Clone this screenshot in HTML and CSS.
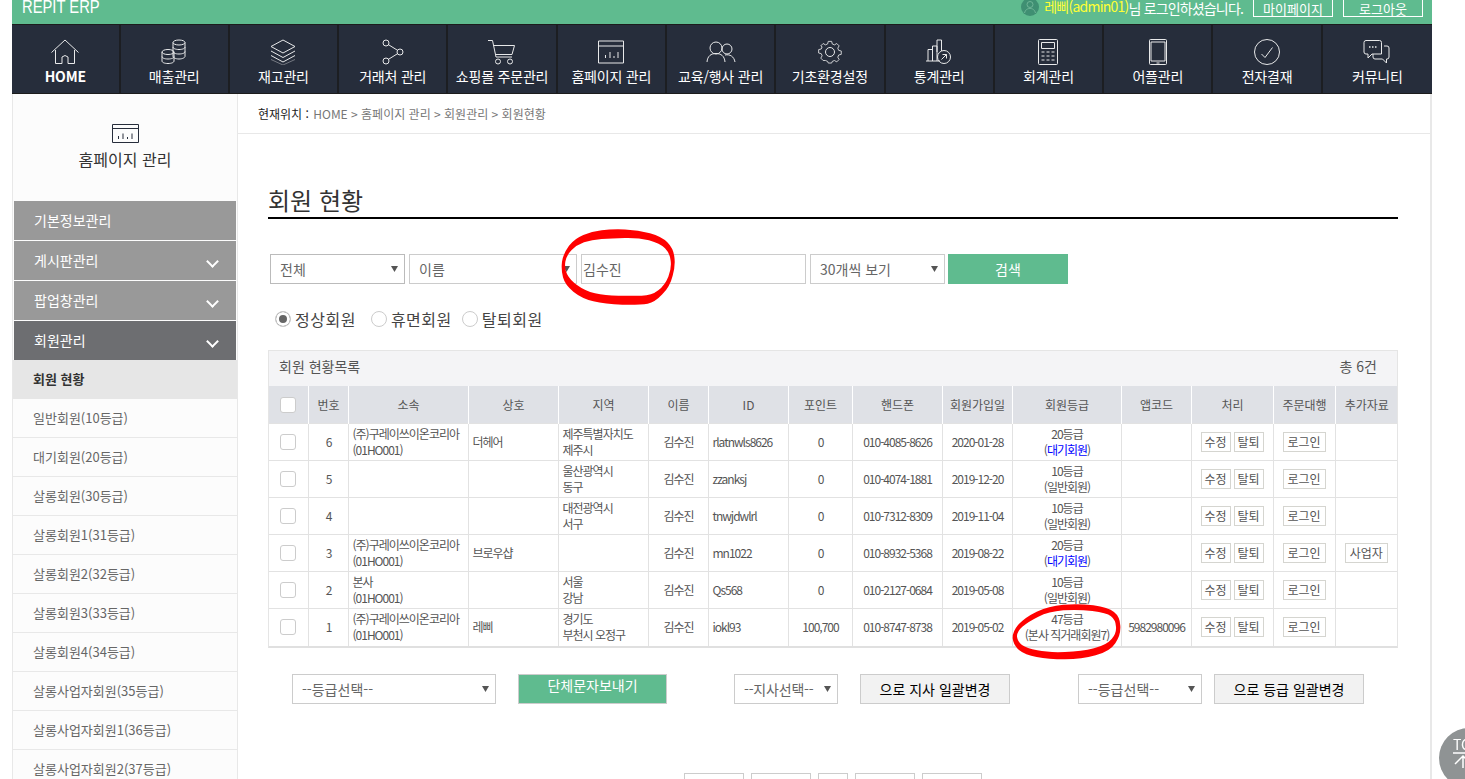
FILE: index.html
```html
<!DOCTYPE html>
<html lang="ko">
<head>
    <meta charset="UTF-8">
    <title>REPIT ERP</title>
    <link rel="stylesheet" href="styles.css">
</head>
<body>
    <div class="wrap">
        <div class="top-bar">
            <div class="logo">REPIT ERP</div>
            <div class="user-info">
                <svg class="avatar" viewBox="0 0 18 18"><circle cx="9" cy="9" r="9" fill="#3f8f72"/><circle cx="9" cy="6.5" r="3" fill="none" stroke="#6fb597"/><path d="M3.5 15c1-3.5 3-4.5 5.500-4.500s4.500 1 5.500 4.500" fill="none" stroke="#6fb597"/></svg>
                <span class="user-name">레삐(admin01)</span><span class="user-msg">님 로그인하셨습니다.</span>
                <a class="top-btn">마이페이지</a>
                <a class="top-btn">로그아웃</a>
            </div>
        </div>

        <div class="gnb">
            <a class="gnb-item">
                <svg class="gnb-icon" viewBox="0 0 30 26"><path d="M1.500 13.500 15 1l13.500 12.500M5.500 11v13.500h6.500V18q3-3 6 0v6.500h6.500V11"/></svg>
                <span class="gnb-home">HOME</span>
            </a>
            <a class="gnb-item">
                <svg class="gnb-icon" viewBox="0 0 30 26"><ellipse cx="20" cy="3.500" rx="6" ry="2.500"/><path d="M14 3.500v14c0 1 2.500 2.500 6 2.500s6-1.500 6-2.500v-14M14 8c0 1.500 2.500 2.500 6 2.500S26 9.500 26 8M14 12.500c0 1.500 2.500 2.500 6 2.500s6-1 6-2.500"/><ellipse cx="9" cy="13" rx="6" ry="2.500"/><path d="M3 13v9c0 1.500 2.500 2.500 6 2.500s6-1 6-2.500v-9M3 17.500c0 1.500 2.500 2.500 6 2.500s6-1 6-2.500"/></svg>
                <span>매출관리</span>
            </a>
            <a class="gnb-item">
                <svg class="gnb-icon" viewBox="0 0 30 26"><path d="M15 1 27 7.500 15 14 3 7.500zM3 12l12 6.500L27 12M3 16.500 15 23l12-6.500"/><path d="M3 20.500 15 26l12-5.500" opacity=".4"/></svg>
                <span>재고관리</span>
            </a>
            <a class="gnb-item">
                <svg class="gnb-icon" viewBox="0 0 30 26"><circle cx="8" cy="4" r="3"/><circle cx="22" cy="13" r="3"/><circle cx="8" cy="22" r="3"/><path d="M10.500 5.700 19.500 11.300M19.500 14.700 10.500 20.300"/></svg>
                <span>거래처 관리</span>
            </a>
            <a class="gnb-item">
                <svg class="gnb-icon" viewBox="0 0 30 26"><path d="M1 1.500h4.500L9 18h16M6.500 6.500h21L25 15.500H8.500"/><circle cx="11" cy="22.500" r="2.500"/><circle cx="23" cy="22.500" r="2.500"/></svg>
                <span>쇼핑몰 주문관리</span>
            </a>
            <a class="gnb-item">
                <svg class="gnb-icon" viewBox="0 0 30 26"><path d="M2.500 2h25v22h-25zM2.500 7h25M9.500 19v-3M14 19v-6M18 19v-2M22 19v-6"/></svg>
                <span>홈페이지 관리</span>
            </a>
            <a class="gnb-item">
                <svg class="gnb-icon" viewBox="0 0 30 26"><circle cx="10" cy="9" r="6"/><path d="M1 23c.5-6 4-8.500 9-8.500s8.500 2.500 9 8.500"/><circle cx="21" cy="10" r="5"/><path d="M19 16c5-1 9 1.500 10 7"/></svg>
                <span>교육/행사 관리</span>
            </a>
            <a class="gnb-item">
                <svg class="gnb-icon" viewBox="0 0 30 26"><path d="M13 1.500h4l.7 3 2.600 1.100 2.700-1.600 2.800 2.800-1.600 2.700 1.100 2.600 3 .7v4l-3 .7-1.100 2.600 1.600 2.700-2.800 2.800-2.700-1.600-2.600 1.100-.7 1.900h-4l-.7-1.900-2.600-1.100L7 24l-2.800-2.800 1.600-2.700-1.100-2.600-3-.7v-4l3-.7 1.100-2.600L4.200 6.800 7 4l2.700 1.600 2.600-1.100z" transform="translate(2.200 1.100) scale(.85)"/><circle cx="15" cy="13" r="4.500"/></svg>
                <span>기초환경설정</span>
            </a>
            <a class="gnb-item">
                <svg class="gnb-icon" viewBox="0 0 30 26"><path d="M4 22V10.500h4.500V22M8.500 22V7H13v15M2 22h14M13 13V1h4.500v11"/><circle cx="20" cy="18" r="6.500"/><path d="M17.500 20.500l5-5M18.500 15.500h4v4"/></svg>
                <span>통계관리</span>
            </a>
            <a class="gnb-item">
                <svg class="gnb-icon" viewBox="0 0 30 26"><rect x="5.500" y=".5" width="19" height="25" rx="1"/><path d="M8.500 3.500h13v6h-13zM8.500 13h3M13.500 13h3M18.500 13h3M8.500 17h3M13.500 17h3M18.500 17h3M8.500 21h3M13.500 21h3M18.500 21h3"/></svg>
                <span>회계관리</span>
            </a>
            <a class="gnb-item">
                <svg class="gnb-icon" viewBox="0 0 30 26"><rect x="6.500" y=".5" width="17" height="25" rx="1"/><path d="M8 3h14v19H8zM13.500 24h3"/></svg>
                <span>어플관리</span>
            </a>
            <a class="gnb-item">
                <svg class="gnb-icon" viewBox="0 0 30 26"><circle cx="15" cy="13" r="12.500"/><path d="M9.500 15l3.500 3.500 7.500-10"/></svg>
                <span>전자결재</span>
            </a>
            <a class="gnb-item">
                <svg class="gnb-icon" viewBox="0 0 30 26"><path d="M19.500 15V3.500q0-2-2-2H4q-2 0-2 2V13q0 2 2 2h2v4l4-4z"/><path d="M22 7h3q2 0 2 2v9q0 2-2 2h-.5v4l-4-4H13q-2 0-2-2v-3"/><path d="M7 8h1.500M10 8h1.500M13 8h1.500" stroke-width="1.500"/></svg>
                <span>커뮤니티</span>
            </a>
        </div>

        <div class="layout">
            <div class="side">
                <div class="side-title">
                    <svg class="side-icon" viewBox="0 0 27 19"><path d="M.5.5h26v18H.5zM.5 4.500h26M6.500 15v-3M11 15v-5.500M15.500 15v-2M20 15V9.500"/></svg>
                    <div>홈페이지 관리</div>
                </div>
                <a class="side-menu">기본정보관리</a>
                <a class="side-menu has-sub">게시판관리</a>
                <a class="side-menu has-sub">팝업창관리</a>
                <a class="side-menu has-sub active">회원관리</a>
                <a class="side-sub current">회원 현황</a>
                <a class="side-sub">일반회원(10등급)</a>
                <a class="side-sub">대기회원(20등급)</a>
                <a class="side-sub">살롱회원(30등급)</a>
                <a class="side-sub">살롱회원1(31등급)</a>
                <a class="side-sub">살롱회원2(32등급)</a>
                <a class="side-sub">살롱회원3(33등급)</a>
                <a class="side-sub">살롱회원4(34등급)</a>
                <a class="side-sub">살롱사업자회원(35등급)</a>
                <a class="side-sub">살롱사업자회원1(36등급)</a>
                <a class="side-sub">살롱사업자회원2(37등급)</a>
            </div>

            <div class="content">
                <div class="breadcrumb"><b>현재위치 :</b> HOME &gt; 홈페이지 관리 &gt; 회원관리 &gt; 회원현황</div>
                <div class="content-inner">
                    <h2 class="page-title">회원 현황</h2>

                    <div class="search-row">
                        <select class="sel sel-type"><option>전체</option></select>
                        <select class="sel sel-field"><option>이름</option></select>
                        <input class="search-input" type="text" value="김수진">
                        <select class="sel sel-count"><option>30개씩 보기</option></select>
                        <button class="search-btn">검색</button>
                    </div>

                    <div class="radio-row">
                        <label class="radio-label first"><span class="radio on"></span>정상회원</label>
                        <label class="radio-label"><span class="radio"></span>휴면회원</label>
                        <label class="radio-label"><span class="radio"></span>탈퇴회원</label>
                    </div>

                    <div class="list-box">
                        <div class="list-head"><span>회원 현황목록</span><span>총 6건</span></div>
                        <table class="list-table">
                            <colgroup>
                                <col class="w39"><col class="w40"><col class="w120"><col class="w90"><col class="w90"><col class="w60"><col class="w80"><col class="w64"><col class="w90"><col class="w70"><col class="w109"><col class="w70"><col class="w82"><col class="w62"><col class="w62">
                            </colgroup>
                            <thead>
                                <tr>
                                    <th><input class="chk" type="checkbox"></th>
                                    <th>번호</th><th>소속</th><th>상호</th><th>지역</th><th>이름</th><th>ID</th><th>포인트</th><th>핸드폰</th><th>회원가입일</th><th>회원등급</th><th>앱코드</th><th>처리</th><th>주문대행</th><th>추가자료</th>
                                </tr>
                            </thead>
                            <tbody>
                                <tr>
                                    <td><input class="chk" type="checkbox"></td><td>6</td>
                                    <td class="left">(주)구레이쓰이온코리아<br>(01HO001)</td><td class="left">더헤어</td><td class="left">제주특별자치도<br>제주시</td>
                                    <td>김수진</td><td class="left">rlatnwls8626</td><td>0</td><td>010-4085-8626</td><td>2020-01-28</td>
                                    <td>20등급<br>(<span class="blue">대기회원</span>)</td><td></td>
                                    <td class="act"><a class="mini">수정</a><a class="mini">탈퇴</a></td><td class="act"><a class="mini wide">로그인</a></td><td></td>
                                </tr>
                                <tr>
                                    <td><input class="chk" type="checkbox"></td><td>5</td>
                                    <td class="left"></td><td class="left"></td><td class="left">울산광역시<br>동구</td>
                                    <td>김수진</td><td class="left">zzanksj</td><td>0</td><td>010-4074-1881</td><td>2019-12-20</td>
                                    <td>10등급<br>(일반회원)</td><td></td>
                                    <td class="act"><a class="mini">수정</a><a class="mini">탈퇴</a></td><td class="act"><a class="mini wide">로그인</a></td><td></td>
                                </tr>
                                <tr>
                                    <td><input class="chk" type="checkbox"></td><td>4</td>
                                    <td class="left"></td><td class="left"></td><td class="left">대전광역시<br>서구</td>
                                    <td>김수진</td><td class="left">tnwjdwlrl</td><td>0</td><td>010-7312-8309</td><td>2019-11-04</td>
                                    <td>10등급<br>(일반회원)</td><td></td>
                                    <td class="act"><a class="mini">수정</a><a class="mini">탈퇴</a></td><td class="act"><a class="mini wide">로그인</a></td><td></td>
                                </tr>
                                <tr>
                                    <td><input class="chk" type="checkbox"></td><td>3</td>
                                    <td class="left">(주)구레이쓰이온코리아<br>(01HO001)</td><td class="left">브로우샵</td><td class="left"></td>
                                    <td>김수진</td><td class="left">mn1022</td><td>0</td><td>010-8932-5368</td><td>2019-08-22</td>
                                    <td>20등급<br>(<span class="blue">대기회원</span>)</td><td></td>
                                    <td class="act"><a class="mini">수정</a><a class="mini">탈퇴</a></td><td class="act"><a class="mini wide">로그인</a></td><td class="act"><a class="mini wide">사업자</a></td>
                                </tr>
                                <tr>
                                    <td><input class="chk" type="checkbox"></td><td>2</td>
                                    <td class="left">본사<br>(01HO001)</td><td class="left"></td><td class="left">서울<br>강남</td>
                                    <td>김수진</td><td class="left">Qs568</td><td>0</td><td>010-2127-0684</td><td>2019-05-08</td>
                                    <td>10등급<br>(일반회원)</td><td></td>
                                    <td class="act"><a class="mini">수정</a><a class="mini">탈퇴</a></td><td class="act"><a class="mini wide">로그인</a></td><td></td>
                                </tr>
                                <tr>
                                    <td><input class="chk" type="checkbox"></td><td>1</td>
                                    <td class="left">(주)구레이쓰이온코리아<br>(01HO001)</td><td class="left">레삐</td><td class="left">경기도<br>부천시 오정구</td>
                                    <td>김수진</td><td class="left">iokl93</td><td>100,700</td><td>010-8747-8738</td><td>2019-05-02</td>
                                    <td>47등급<br>(본사 직거래회원7)</td><td>5982980096</td>
                                    <td class="act"><a class="mini">수정</a><a class="mini">탈퇴</a></td><td class="act"><a class="mini wide">로그인</a></td><td></td>
                                </tr>
                            </tbody>
                        </table>
                    </div>

                    <div class="bulk-row">
                        <select class="sel bulk-grade"><option>--등급선택--</option></select>
                        <button class="sms-btn">단체문자보내기</button>
                        <select class="sel bulk-branch"><option>--지사선택--</option></select>
                        <button class="bulk-btn">으로 지사 일괄변경</button>
                        <select class="sel bulk-grade2"><option>--등급선택--</option></select>
                        <button class="bulk-btn bulk-btn2">으로 등급 일괄변경</button>
                    </div>

                    <div class="paging">
                        <a class="page-btn"></a>
                        <a class="page-btn"></a>
                        <a class="page-btn small"></a>
                        <a class="page-btn"></a>
                        <a class="page-btn"></a>
                    </div>
                </div>
            </div>
        </div>
    </div>

    <a class="go-top">TOP<svg class="go-top-arrow" viewBox="0 0 20 16"><path d="M0 1h20M10 16V4M2 12l8-8 8 8"/></svg></a>

    <!-- red marker circles drawn over the screenshot -->
    <svg class="marks" viewBox="0 0 1465 779">
        <path transform="translate(555 225) scale(.3333)" d="M210 13.500Q250 15 285 25Q320 35 337 52Q355 70 358 95Q362 120 353 152Q345 185 322 208Q300 232 278 236Q255 240 202 239Q150 238 115 229Q80 220 55 200Q30 180 24 157Q18 135 21 110Q25 85 42 62Q60 40 85 30Q110 20 140 16Q170 12 210 13.500ZM210 39Q250 38 282 46Q315 55 330 70Q345 85 347 107Q350 130 340 155Q330 180 310 196Q290 212 260 212Q230 212 190 212Q150 212 120 205Q90 198 67 181Q45 165 36 147Q28 130 31 110Q35 90 50 75Q65 60 87 52Q110 45 140 42Q170 40 210 39Z"/>
        <path transform="translate(1005 600) scale(.3333)" d="M95 35Q130 18 175 14Q220 10 265 16Q310 22 327 36Q345 50 346 77Q348 105 331 130Q315 155 272 166Q230 178 180 178Q130 178 95 171Q60 165 42 150Q25 135 23 115Q22 95 41 73Q60 52 95 35ZM100 50Q130 35 175 31Q220 28 262 33Q305 38 318 49Q332 60 333 80Q335 100 320 117Q305 135 267 145Q230 155 180 156Q130 158 97 151Q65 145 51 135Q38 125 36 110Q35 95 52 80Q70 65 100 50Z"/>
    </svg>
</body>
</html>
```

FILE: styles.css
```css
html, body {
    height: 779px;
    overflow: hidden;
}
body {
    margin: 0;
    padding: 0;
    background-color: #fff;
    color: #555;
    font-family: "Noto Sans CJK KR", "Noto Sans", sans-serif;
    font-size: 12px;
}
a {
    text-decoration: none;
    color: inherit;
}
.wrap {
    margin: 0 33px 0 12px;
}

/* top bar */
.top-bar {
    display: flex;
    justify-content: space-between;
    height: 24px;
    overflow: hidden;
    background-color: #5fbb8f;
    color: #fff;
}
.logo {
    padding-left: 10px;
    font-family: "Liberation Sans", sans-serif;
    font-size: 18px;
    line-height: 15px;
    transform: scaleX(.82);
    transform-origin: 10px 0;
}
.user-info {
    display: flex;
    align-items: flex-start;
    font-size: 14px;
    line-height: 16px;
    padding-right: 9px;
}
.avatar {
    width: 18px;
    height: 18px;
    margin: -2px 5px 0 0;
}
.user-name {
    color: #ffff33;
    margin-top: -2px;
    letter-spacing: -.75px;
}
.user-msg {
    letter-spacing: -.85px;
}
.top-btn {
    display: block;
    box-sizing: border-box;
    width: 80px;
    height: 17px;
    margin-left: 10px;
    border: 1px solid #fff;
    border-top: none;
    text-align: center;
    font-size: 13px;
    line-height: 17px;
}

/* main nav */
.gnb {
    display: grid;
    grid-template-columns: 108.5px repeat(12, 1fr);
    height: 70px;
    background-color: #262d3b;
    border-top: 1px solid #1c1c1c;
    border-bottom: 1px solid #1c1c1c;
    box-sizing: border-box;
}
.gnb-item {
    display: flex;
    flex-direction: column;
    align-items: center;
    padding-top: 14px;
    border-right: 2px solid #1c1e22;
    color: #fff;
    font-size: 14px;
    line-height: 20px;
    letter-spacing: -.2px;
    white-space: nowrap;
}
.gnb-item:last-child {
    border-right: none;
}
.gnb-icon {
    width: 30px;
    height: 26px;
    margin-bottom: 1px;
    fill: none;
    stroke: #e8e9ea;
    stroke-width: 1;
}
.gnb-home {
    font-weight: 700;
}

/* layout */
.layout {
    display: flex;
    height: 685px;
}
.side {
    flex: none;
    box-sizing: border-box;
    width: 226px;
    border-left: 1px solid #e8e8e8;
    border-right: 1px solid #e8e8e8;
    background-color: #fcfcfc;
}
.side-title {
    height: 107px;
    box-sizing: border-box;
    padding-top: 30px;
    text-align: center;
    color: #333;
    font-size: 16px;
    line-height: 22px;
}
.side-icon {
    display: block;
    width: 27px;
    height: 19px;
    margin: 0 auto 5px;
    fill: none;
    stroke: #262d3b;
    stroke-width: 1;
}
.side-menu {
    display: block;
    position: relative;
    height: 39px;
    margin: 0 1px 1px;
    padding-left: 20px;
    background-color: #999;
    color: #fff;
    font-size: 14px;
    line-height: 38px;
}
.side-menu.active {
    background-color: #6d6e71;
    margin-bottom: 0;
}
.has-sub::after {
    content: "";
    position: absolute;
    right: 19px;
    top: 16px;
    width: 7px;
    height: 7px;
    border-right: 2px solid #fff;
    border-bottom: 2px solid #fff;
    transform: rotate(45deg);
}
.side-sub {
    display: block;
    height: 38px;
    padding-left: 20px;
    border-bottom: 1px solid #e8e8e8;
    color: #666;
    font-size: 13px;
    line-height: 38px;
}
.side-sub.current {
    background-color: #e6e6e6;
    border-bottom-color: #e6e6e6;
    color: #333;
    font-weight: 700;
}

/* content */
.content {
    flex: 1;
    border-right: 2px solid #e8e8e8;
}
.breadcrumb {
    height: 39px;
    padding-left: 20px;
    border-bottom: 1px solid #e8e8e8;
    line-height: 39px;
    color: #777;
}
.breadcrumb b {
    margin-right: 1px;
    font-weight: 400;
    color: #222;
}
.content-inner {
    padding: 0 32px 0 30px;
}
.page-title {
    height: 83px;
    margin: 0;
    overflow: hidden;
    border-bottom: 2px solid #000;
    color: #333;
    font-size: 24px;
    font-weight: 400;
    line-height: 132px;
}

/* search */
.sel {
    appearance: none;
    box-sizing: border-box;
    height: 30px;
    padding: 0 0 0 9px;
    border: 1px solid #ccc;
    border-radius: 0;
    background: #fff url("data:image/svg+xml,%3Csvg xmlns='http://www.w3.org/2000/svg' width='7' height='6'%3E%3Cpath d='M0 0h7L3.500 6z' fill='%23555'/%3E%3C/svg%3E") no-repeat right 6px center;
    color: #666;
    font-family: inherit;
    font-size: 14px;
}
.search-row {
    display: flex;
    margin: 35px 0 0 2px;
}
.sel-type {
    width: 135px;
    border-color: #bbb;
}
.sel-field {
    width: 168px;
    margin-left: 4px;
}
.search-input {
    box-sizing: border-box;
    width: 225px;
    height: 30px;
    margin-left: 4px;
    padding: 0 1px;
    border: 1px solid #ccc;
    color: #666;
    font-family: inherit;
    font-size: 14px;
}
.sel-count {
    width: 135px;
    margin-left: 4px;
}
.search-btn {
    width: 120px;
    height: 30px;
    margin-left: 3px;
    border: none;
    background-color: #5fbb8f;
    color: #fff;
    font-family: inherit;
    font-size: 14px;
}
.radio-row {
    display: flex;
    height: 30px;
    margin: 20px 0 0 7px;
    gap: 10px;
    align-items: center;
    color: #444;
    font-size: 16px;
    letter-spacing: .5px;
}
.radio-label {
    display: flex;
    align-items: center;
    gap: 4px;
}
.radio-label.first {
    margin-right: 5px;
}
.radio {
    box-sizing: border-box;
    width: 16px;
    height: 16px;
    border: 1px solid #ccc;
    border-radius: 50%;
    background-color: #fff;
}
.radio.on {
    background-color: #666;
    box-shadow: inset 0 0 0 3px #fff;
}

/* list */
.list-box {
    box-sizing: border-box;
    width: 1130px;
    margin-top: 16px;
    border: 1px solid #e5e5e5;
    border-bottom: 2px solid #e0e0e0;
}
.list-head {
    display: flex;
    justify-content: space-between;
    height: 35px;
    padding: 0 20px 0 10px;
    background-color: #f4f4f6;
    color: #555;
    font-size: 14px;
    line-height: 31px;
}
.list-table {
    width: 1128px;
    table-layout: fixed;
    border-collapse: collapse;
}
.w39 { width: 39px; }
.w40 { width: 40px; }
.w60 { width: 60px; }
.w62 { width: 62px; }
.w64 { width: 64px; }
.w70 { width: 70px; }
.w80 { width: 80px; }
.w82 { width: 82px; }
.w90 { width: 90px; }
.w109 { width: 109px; }
.w120 { width: 120px; }
.list-table th {
    height: 37px;
    padding: 0 0 0 1px;
    border-left: 1px solid #fff;
    background-color: #dfe1e6;
    color: #555;
    font-weight: 400;
}
.list-table th:first-child {
    padding: 0;
    border-left: none;
}
.list-table td {
    box-sizing: border-box;
    height: 37px;
    padding: 0 0 0 1px;
    border: 1px solid #e2e2e2;
    text-align: center;
    color: #555;
    line-height: 16px;
    letter-spacing: -1px;
}
.list-table td:first-child {
    padding: 0;
    border-left: none;
}
.list-table td:last-child {
    border-right: none;
}
.list-table tr:last-child td {
    border-bottom: none;
}
.list-table td.left {
    padding-left: 4px;
    text-align: left;
}
.list-table td.act {
    padding: 0;
}
.chk {
    appearance: none;
    display: block;
    box-sizing: border-box;
    width: 16px;
    height: 16px;
    margin: 0 auto;
    border: 1px solid #ccc;
    border-radius: 3px;
    background-color: #fff;
}
.blue {
    color: #0000ff;
}
.mini {
    display: inline-block;
    box-sizing: border-box;
    width: 30px;
    height: 20px;
    margin: 0 1.5px;
    border: 1px solid #d5d5d0;
    text-align: center;
    line-height: 18px;
    letter-spacing: 0;
}
.mini.wide {
    width: 43px;
    margin: 0;
}
.bulk-row {
    display: flex;
    margin: 26px 0 0 24px;
}
.bulk-grade {
    width: 204px;
}
.sms-btn {
    box-sizing: border-box;
    width: 149px;
    height: 30px;
    margin-left: 22px;
    padding: 0 0 12px;
    border: 1px solid #ccc;
    background-color: #5fbb8f;
    color: #fff;
    font-family: inherit;
    font-size: 14px;
}
.bulk-branch {
    width: 104px;
    margin-left: 67px;
    letter-spacing: -.2px;
}
.bulk-btn {
    box-sizing: border-box;
    width: 150px;
    height: 30px;
    margin-left: 22px;
    border: 1px solid #ccc;
    background-color: #f2f2f2;
    color: #000;
    font-family: inherit;
    font-size: 14px;
}
.bulk-grade2 {
    width: 124px;
    margin-left: 68px;
}
.bulk-btn2 {
    margin-left: 12px;
}
.paging {
    display: flex;
    margin: 69px 0 0 416px;
    gap: 7px;
}
.page-btn {
    box-sizing: border-box;
    width: 60px;
    height: 30px;
    border: 1px solid #ccc;
}
.page-btn.small {
    width: 30px;
}

/* floating */
.go-top {
    position: fixed;
    left: 1439px;
    top: 728px;
    width: 60px;
    height: 60px;
    box-sizing: border-box;
    padding: 9px 0 0 14px;
    border-radius: 50%;
    background-color: #8f9394;
    color: #fff;
    font-size: 14px;
    line-height: 14px;
}
.go-top-arrow {
    display: block;
    width: 20px;
    height: 16px;
    margin-top: 1px;
    fill: none;
    stroke: #fff;
    stroke-width: 1.5;
}
.marks {
    position: absolute;
    left: 0;
    top: 0;
    width: 1465px;
    height: 779px;
    pointer-events: none;
    fill: #f00;
    fill-rule: evenodd;
}
```
